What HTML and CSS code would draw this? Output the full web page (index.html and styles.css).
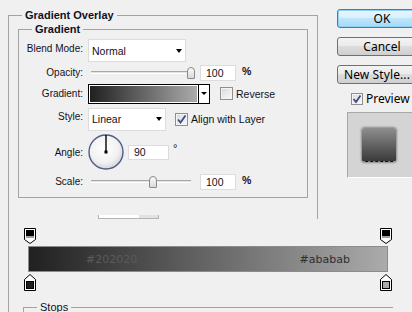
FILE: index.html
```html
<!DOCTYPE html>
<html lang="en">
<head>
    <meta charset="UTF-8">
    <title>Layer Style - Gradient Overlay</title>
    <link rel="stylesheet" href="styles.css">
</head>
<body>
    <div class="top">
        <div class="main">
            <div class="group outer">
                <div class="group-title">Gradient Overlay</div>
                <div class="group inner">
                    <div class="group-title">Gradient</div>

                    <div class="row row-blend">
                        <span class="label label-up">Blend Mode:</span>
                        <div class="select select-blend"><span>Normal</span><span class="arrow"></span></div>
                    </div>

                    <div class="row row-opacity">
                        <span class="label">Opacity:</span>
                        <div class="slider"><div class="track"></div><div class="thumb" style="left: 96px"></div></div>
                        <div class="num">100</div>
                        <span class="unit">%</span>
                    </div>

                    <div class="row row-gradient">
                        <span class="label">Gradient:</span>
                        <div class="swatch">
                            <div class="swatch-fill"></div>
                            <div class="swatch-drop"><span class="arrow"></span></div>
                        </div>
                        <span class="check check-reverse"></span>
                        <span class="check-text">Reverse</span>
                    </div>

                    <div class="row row-style">
                        <span class="label label-up">Style:</span>
                        <div class="select select-style"><span>Linear</span><span class="arrow"></span></div>
                        <span class="check check-align">
                            <svg width="11" height="11" viewBox="0 0 11 11"><path d="M2 5.5L4.5 8.5L9.5 1.5" fill="none" stroke="#3b4d88" stroke-width="1.8"/></svg>
                        </span>
                        <span class="check-text">Align with Layer</span>
                    </div>

                    <div class="row row-angle">
                        <span class="label">Angle:</span>
                        <svg class="dial" width="36" height="36" viewBox="0 0 36 36">
                            <defs>
                                <radialGradient id="dialFill" cx="0.45" cy="0.4" r="0.6">
                                    <stop offset="0" stop-color="#ffffff"/>
                                    <stop offset="0.7" stop-color="#f1f1f1"/>
                                    <stop offset="1" stop-color="#d6d6d6"/>
                                </radialGradient>
                            </defs>
                            <circle cx="18" cy="18" r="17" fill="url(#dialFill)" stroke="#4e5d8b" stroke-width="1.4"/>
                            <line x1="18" y1="18" x2="18" y2="1" stroke="#000" stroke-width="1.4"/>
                            <rect x="16.5" y="16.5" width="3" height="3" fill="#000"/>
                        </svg>
                        <div class="num num-angle">90</div>
                        <span class="degree">°</span>
                    </div>

                    <div class="row row-scale">
                        <span class="label">Scale:</span>
                        <div class="slider"><div class="track"></div><div class="thumb" style="left: 58px"></div></div>
                        <div class="num">100</div>
                        <span class="unit">%</span>
                    </div>
                </div>
                <div class="cutoff"></div>
            </div>
        </div>

        <div class="side">
            <div class="btn btn-ok">OK</div>
            <div class="btn">Cancel</div>
            <div class="btn btn-last">New Style...</div>
            <div class="preview-row">
                <span class="check check-preview">
                    <svg width="10" height="10" viewBox="0 0 10 10"><path d="M1.5 5L4 8L8.5 1.5" fill="none" stroke="#3b4d88" stroke-width="1.8"/></svg>
                </span>
                <span class="preview-text">Preview</span>
            </div>
            <div class="preview-box"><div class="preview-swatch"></div></div>
        </div>
    </div>

    <div class="editor">
        <div class="marker-row">
            <svg width="12" height="16" viewBox="0 0 12 16"><path d="M0.5 0.5H11.5V11.5L6 15.5L0.5 11.5Z" fill="#fff" stroke="#000"/><rect x="2" y="2" width="8" height="6" fill="#000"/><rect x="2" y="8" width="8" height="2" fill="#a0a0a0"/></svg>
            <svg width="12" height="16" viewBox="0 0 12 16"><path d="M0.5 0.5H11.5V11.5L6 15.5L0.5 11.5Z" fill="#fff" stroke="#000"/><rect x="2" y="2" width="8" height="6" fill="#000"/><rect x="2" y="8" width="8" height="2" fill="#a0a0a0"/></svg>
        </div>
        <div class="gradient-bar">
            <span class="stop-dark">#202020</span>
            <span class="stop-light">#ababab</span>
        </div>
        <div class="marker-row marker-row-bottom">
            <svg width="12" height="17" viewBox="0 0 12 17"><path d="M0.5 16.5V5.5L6 0.5L11.5 5.5V16.5Z" fill="#fff" stroke="#000"/><rect x="2.5" y="7.5" width="7" height="7" fill="#202020" stroke="#000"/></svg>
            <svg width="12" height="17" viewBox="0 0 12 17"><path d="M0.5 16.5V5.5L6 0.5L11.5 5.5V16.5Z" fill="#fff" stroke="#000"/><rect x="2.5" y="7.5" width="7" height="7" fill="#ababab" stroke="#000"/></svg>
        </div>
        <div class="stops-line">
            <div class="group stops-group">
                <div class="group-title">Stops</div>
            </div>
        </div>
    </div>
</body>
</html>
```

FILE: styles.css
```css
* {
    box-sizing: border-box;
}

body {
    margin: 0;
    width: 412px;
    height: 312px;
    overflow: hidden;
    background-color: #f0f0f0;
    font-family: 'Liberation Sans', Arial, sans-serif;
    font-size: 10px;
    color: #10101c;
}

.top {
    display: flex;
    align-items: flex-start;
}

.main {
    margin: 15px 0 0 8px;
    width: 310px;
    flex: none;
}

.group {
    border: 1px solid #a3a3a3;
}

.group-title {
    width: fit-content;
    margin: -7px 0 0 13px;
    padding: 0 3px;
    background-color: #f0f0f0;
    font-size: 11px;
    font-weight: bold;
    line-height: 13px;
}

.outer {
    width: 310px;
    border-bottom: none;
}

.inner {
    margin: 7px 0 0 9px;
    width: 290px;
    padding-bottom: 4px;
}

.row {
    display: flex;
    align-items: center;
}

.row-blend { margin-top: 3px; height: 23px; }
.row-opacity { height: 21px; }
.row-gradient { height: 21px; }
.row-style { height: 30px; }
.row-angle { height: 36px; }
.row-scale { height: 23px; }

.label {
    width: 64px;
    margin-right: 5px;
    flex: none;
    text-align: right;
}

.label-up {
    padding-bottom: 5px;
}

.select {
    display: flex;
    align-items: center;
    justify-content: space-between;
    height: 23px;
    padding: 0 3px;
    background-color: #fff;
    border: 1px solid #dcdcdc;
    font-size: 10.5px;
}

.select-blend { width: 98px; }
.select-style { width: 78px; }

.arrow {
    width: 0;
    height: 0;
    border-left: 3.5px solid transparent;
    border-right: 3.5px solid transparent;
    border-top: 4px solid #000;
}

.slider {
    position: relative;
    width: 104px;
    height: 12px;
    margin-left: 3px;
    display: flex;
    align-items: center;
}

.track {
    width: 100px;
    height: 3px;
    border-top: 1px solid #a8a8a8;
    border-bottom: 1px solid #fff;
    background-color: #e2e2e2;
}

.thumb {
    position: absolute;
    top: 0;
    width: 8px;
    height: 12px;
    border: 1px solid #8a8a8a;
    border-radius: 4px 4px 1px 1px;
    background: linear-gradient(#fbfbfb, #d9d9d9);
}

.num {
    width: 36px;
    height: 16px;
    margin-left: 5px;
    padding-left: 5px;
    background-color: #fff;
    border: 1px solid #dcdcdc;
    font-size: 10.5px;
    line-height: 14px;
}

.unit {
    margin-left: 6px;
    padding-bottom: 4px;
    font-size: 10.5px;
    font-weight: bold;
}

.swatch {
    display: flex;
    width: 122px;
    height: 20px;
    border: 1px solid #000;
    background-color: #fff;
}

.swatch-fill {
    flex: 1;
    margin: 1px;
    background: linear-gradient(to right, #202020, #ababab);
}

.swatch-drop {
    width: 11px;
    border-left: 1px solid #000;
    display: flex;
    align-items: center;
    justify-content: center;
}

.swatch-drop .arrow {
    border-left-width: 3px;
    border-right-width: 3px;
    border-top-width: 3px;
}

.check {
    display: flex;
    align-items: center;
    justify-content: center;
    width: 13px;
    height: 13px;
    flex: none;
    border: 1px solid #8f8f8f;
    background: linear-gradient(135deg, #d8d8d8, #fbfbfb);
    box-shadow: inset 0 0 0 1px #f4f4f4;
}

.check-reverse { margin-left: 10px; }
.check-align { margin-left: 9px; }

.check-text {
    margin-left: 3px;
    font-size: 10.5px;
}

.dial {
    flex: none;
}

.num-angle {
    width: 41px;
    height: 15px;
    margin-left: 4px;
    line-height: 13px;
}

.degree {
    align-self: flex-start;
    margin: 9px 0 0 4px;
    font-size: 11px;
    line-height: 11px;
}

.cutoff {
    margin: 17px 0 0 89px;
    width: 61px;
    height: 4px;
    background: linear-gradient(to right, #fff 0 40px, #e2e2e2 40px);
    border: 1px solid #b4b4b4;
    border-top: none;
}

.side {
    margin: 9px 0 0 19px;
    width: 90px;
    flex: none;
}

.btn {
    display: flex;
    align-items: center;
    justify-content: center;
    width: 90px;
    height: 19px;
    margin-bottom: 9px;
    border: 1px solid #707070;
    border-radius: 3px;
    background: linear-gradient(#f3f3f3 0%, #ebebeb 45%, #dddddd 50%, #cfcfcf 100%);
    font-family: 'Noto Sans', sans-serif;
    font-size: 12px;
    color: #000;
    white-space: nowrap;
}

.btn-ok {
    border-color: #3c7fb1;
    background: linear-gradient(#eaf6fd 0%, #d9f0fc 45%, #bee6fd 50%, #a7d9f5 100%);
    box-shadow: inset 0 0 0 1px #8fd0f5;
}

.btn-last {
    width: 80px;
    margin-bottom: 8px;
    letter-spacing: 0.1px;
}

.preview-row {
    display: flex;
    align-items: center;
    height: 13px;
    margin-left: 14px;
}

.check-preview {
    width: 12px;
    height: 12px;
}

.preview-text {
    margin-left: 3px;
    font-family: 'Noto Sans', sans-serif;
    font-size: 12px;
    color: #000;
}

.preview-box {
    display: flex;
    align-items: center;
    justify-content: center;
    width: 66px;
    height: 66px;
    margin: 7px 0 0 10px;
    border: 1px solid;
    border-color: #a9a9a9 #fff #fff #a9a9a9;
    background-color: #d4d4d4;
}

.preview-swatch {
    width: 34px;
    height: 34px;
    margin-right: 2px;
    border-radius: 3px;
    border-bottom: 1px dashed #111;
    background: linear-gradient(#8e8e8e, #3a3a3a);
    box-shadow: 0 0 2px 1px rgba(0, 0, 0, 0.35);
}

.editor {
    margin-left: 8px;
    height: 93px;
    padding-top: 9px;
    border-left: 1px solid #a3a3a3;
}

.marker-row {
    display: flex;
    justify-content: space-between;
    width: 368px;
    margin-left: 15px;
}

.marker-row svg {
    display: block;
}

.marker-row-bottom {
    margin-top: 2px;
}

.gradient-bar {
    display: flex;
    align-items: center;
    justify-content: space-between;
    width: 360px;
    height: 26px;
    margin: 2px 0 0 19px;
    padding: 0 37px 0 57px;
    border: 1px solid #8c8c8c;
    background: linear-gradient(to right, #202020, #ababab);
    font-family: 'DejaVu Sans', sans-serif;
    font-size: 11px;
}

.stop-dark {
    color: #5a5a5a;
}

.stop-light {
    color: #2e2e2e;
}

.stops-line {
    display: flex;
    margin-top: 16px;
}

.stops-group {
    width: 370px;
    height: 20px;
    margin-left: 14px;
    border-right: none;
    border-bottom: none;
}

.stops-group .group-title {
    margin-top: -6px;
    font-weight: normal;
    font-size: 11px;
    line-height: 11px;
}
```
